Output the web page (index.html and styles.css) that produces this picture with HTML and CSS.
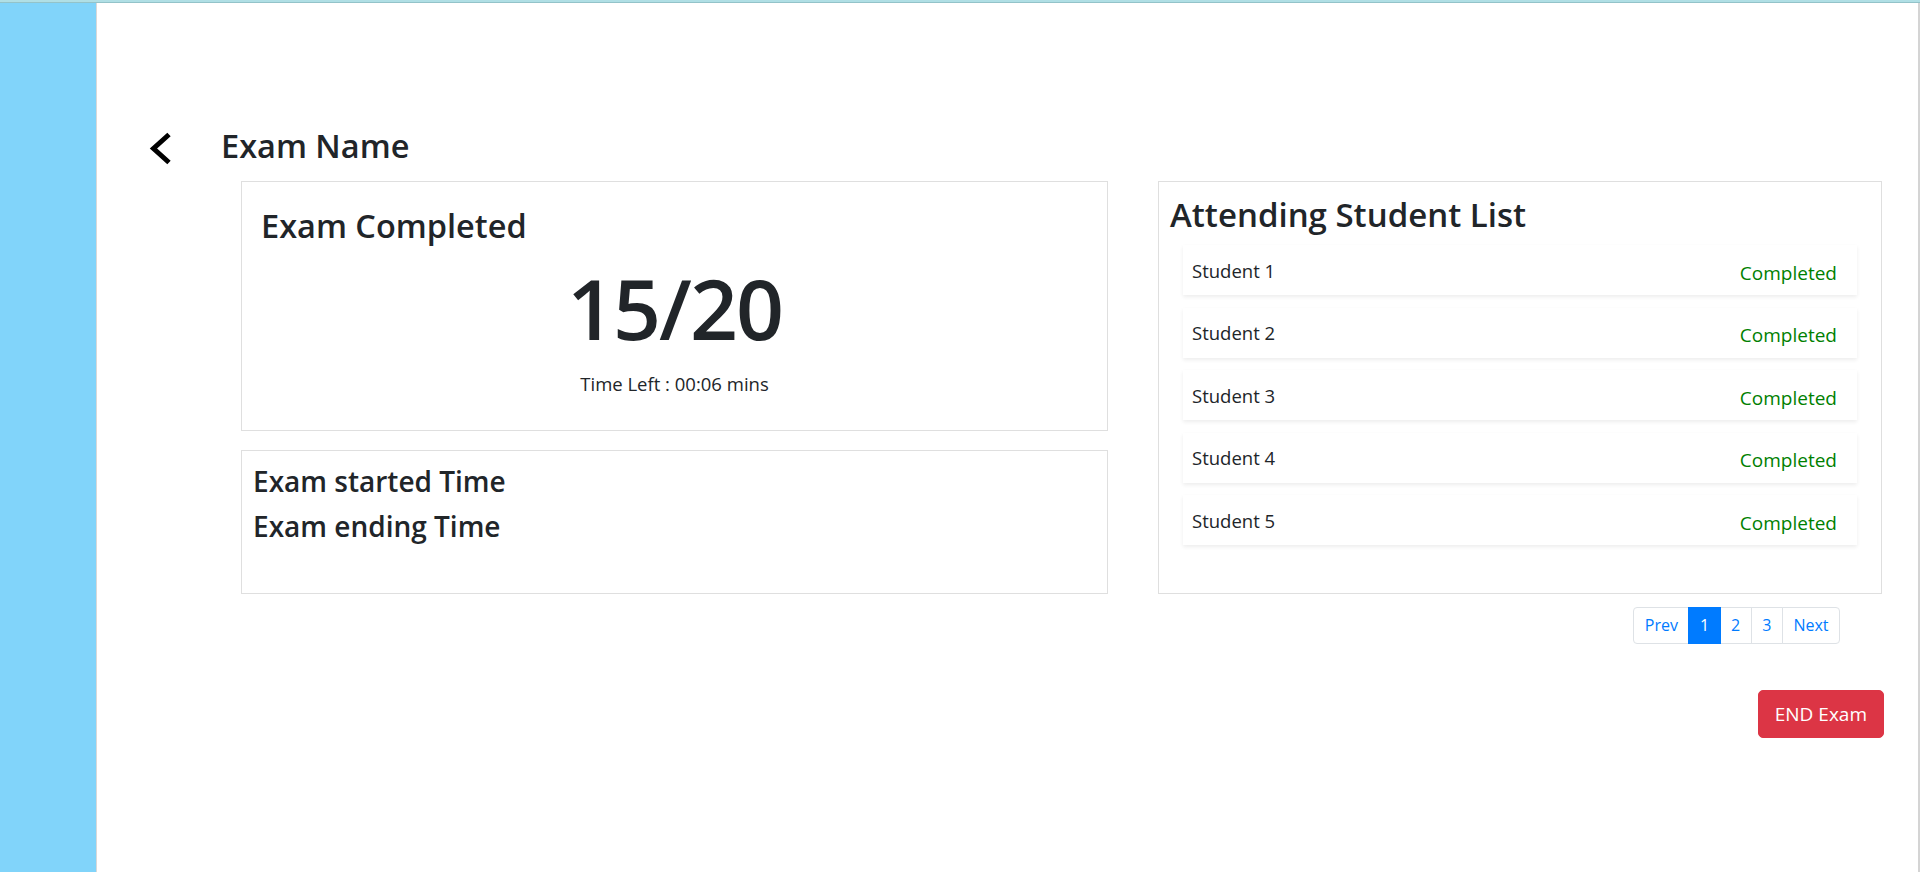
FILE: index.html
```html
<!DOCTYPE html>
<html lang="en">
<head>
<meta charset="utf-8">
<title>Exam Name</title>
<link rel="stylesheet" href="styles.css">
</head>
<body>
<div class="topbar"></div>
<div class="app">
  <aside class="sidebar"></aside>
  <main class="main">
    <header class="exam-header">
      <a class="back" href="#" aria-label="Back">
        <svg width="24" height="36" viewBox="0 0 24 36"><polyline points="21,3.5 5.5,17.5 21,31.5" fill="none" stroke="#000" stroke-width="5" stroke-linejoin="miter" stroke-linecap="butt"/></svg>
      </a>
      <h2 class="exam-title">Exam Name</h2>
    </header>
    <div class="board">
      <div class="col-left">
        <section class="card card-progress">
          <h3 class="card-heading">Exam Completed</h3>
          <div class="score">15/20</div>
          <div class="time-left">Time Left : 00:06 mins</div>
        </section>
        <section class="card card-times">
          <h4 class="time-line">Exam started Time</h4>
          <h4 class="time-line">Exam ending Time</h4>
        </section>
      </div>
      <div class="col-right">
        <section class="card card-students">
          <h3 class="list-heading">Attending Student List</h3>
          <ul class="student-list">
            <li class="student-row"><span class="student-name">Student 1</span><span class="student-status">Completed</span></li>
            <li class="student-row"><span class="student-name">Student 2</span><span class="student-status">Completed</span></li>
            <li class="student-row"><span class="student-name">Student 3</span><span class="student-status">Completed</span></li>
            <li class="student-row"><span class="student-name">Student 4</span><span class="student-status">Completed</span></li>
            <li class="student-row"><span class="student-name">Student 5</span><span class="student-status">Completed</span></li>
          </ul>
        </section>
        <nav class="pager">
          <a class="page-link page-first" href="#">Prev</a>
          <a class="page-link active" href="#">1</a>
          <a class="page-link" href="#">2</a>
          <a class="page-link" href="#">3</a>
          <a class="page-link page-last" href="#">Next</a>
        </nav>
        <div class="actions">
          <button class="btn-end" type="button">END Exam</button>
        </div>
      </div>
    </div>
  </main>
</div>
</body>
</html>
```

FILE: styles.css
```css
* { box-sizing: border-box; }

html, body {
  margin: 0;
  padding: 0;
  height: 872px;
  overflow: hidden;
  background: #fff;
  font-family: "Open Sans", "Noto Sans", sans-serif;
  color: #212529;
}

.topbar {
  height: 3px;
  background: #b0dfe5;
  border-bottom: 1px solid #93c3c9;
}

.app {
  display: flex;
  height: 869px;
}

.sidebar {
  width: 97px;
  flex: none;
  background: #81d4fa;
  border-right: 1px solid #d8d8d8;
}

.main {
  flex: 1;
  border-right: 2px solid #d4d4d4;
  padding-top: 121px;
}

.exam-header {
  display: flex;
  align-items: flex-start;
  height: 44px;
  padding-left: 51px;
  gap: 49px;
}

.back {
  display: block;
  margin-top: 7px;
  line-height: 0;
}

.exam-title {
  margin: 0;
  font-size: 32.5px;
  line-height: 44px;
  font-weight: 600;
}

.board {
  display: flex;
  gap: 50px;
  margin-top: 13px;
  padding-left: 144px;
}

.col-left { width: 867px; flex: none; }
.col-right { width: 724px; flex: none; }

.card {
  border: 1px solid #dfdfdf;
  background: #fff;
}

.card-progress {
  height: 250px;
  padding: 23px 19px 0;
}

.card-heading {
  margin: 0;
  font-size: 32.5px;
  line-height: 41px;
  font-weight: 600;
}

.score {
  margin-top: 17px;
  font-size: 84px;
  line-height: 90px;
  font-weight: 600;
  letter-spacing: -2px;
  text-align: center;
}

.time-left {
  margin-top: 19px;
  font-size: 18.5px;
  line-height: 24px;
  text-align: center;
}

.card-times {
  margin-top: 19px;
  height: 144px;
  padding: 13px 11px;
}

.time-line {
  margin: 0;
  font-size: 28px;
  line-height: 35px;
  font-weight: 600;
}

.time-line + .time-line { margin-top: 10px; }

.card-students {
  height: 413px;
  padding: 12px 0 0;
}

.list-heading {
  margin: 0;
  padding-left: 11px;
  font-size: 33px;
  line-height: 41px;
  font-weight: 600;
}

.student-list {
  list-style: none;
  margin: 10px 24px 0;
  padding: 0;
}

.student-row {
  display: flex;
  justify-content: space-between;
  align-items: flex-start;
  height: 50px;
  padding: 0 20px 0 9px;
  margin-bottom: 12.5px;
  background: #fff;
  box-shadow: 0 2px 4px rgba(0, 0, 0, 0.075);
  font-size: 18.5px;
  line-height: 24px;
}

.student-name { margin-top: 13.5px; }

.student-status {
  margin-top: 15.5px;
  font-size: 19px;
  color: #008000;
}

.pager {
  display: flex;
  justify-content: flex-end;
  margin: 13px 42px 0 0;
}

.page-link {
  display: block;
  padding: 6px 10.5px;
  font-size: 16px;
  line-height: 23px;
  color: #007bff;
  text-decoration: none;
  border: 1px solid #dee2e6;
  margin-left: -1px;
  background: #fff;
}

.page-link.active {
  background: #007bff;
  border-color: #007bff;
  color: #fff;
  position: relative;
}

.page-first { border-radius: 4px 0 0 4px; margin-left: 0; }
.page-last { border-radius: 0 4px 4px 0; }

.actions {
  display: flex;
  justify-content: flex-end;
  margin: 46px -2px 0 0;
}

.btn-end {
  height: 48px;
  padding: 0 16px;
  font-family: "Open Sans", "Noto Sans", sans-serif;
  font-size: 19px;
  color: #fff;
  background: #dc3545;
  border: 1px solid #dc3545;
  border-radius: 5px;
}
```
